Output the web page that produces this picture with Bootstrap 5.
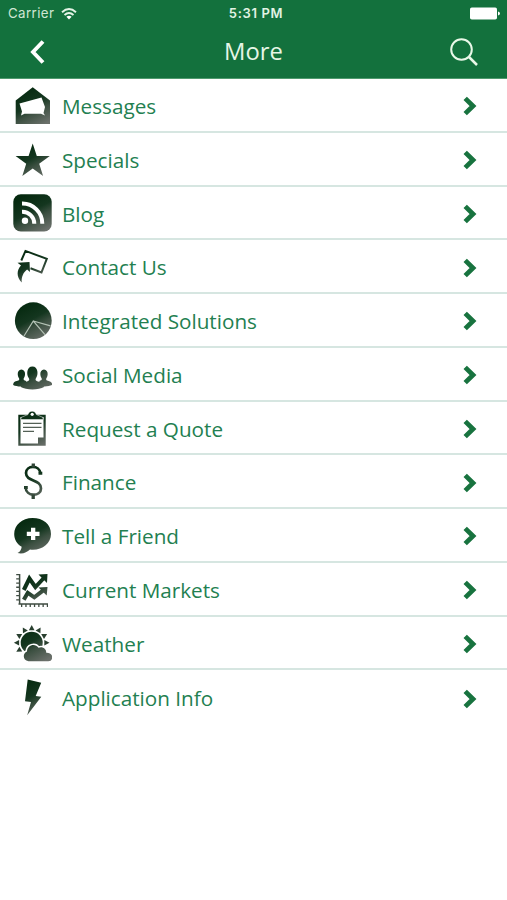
<!DOCTYPE html>
<html lang="en">
<head>
<meta charset="utf-8">
<meta name="viewport" content="width=device-width, initial-scale=1">
<title>More</title>
<link rel="stylesheet" href="https://cdn.jsdelivr.net/npm/bootstrap@5.3.0/dist/css/bootstrap.min.css">
<style>
body{font-family:"Open Sans","Noto Sans",sans-serif;min-height:900px;overflow:hidden}
.app-head{background:#13713d;height:79px;color:#f4fbf4;border-bottom:1px solid #4f9a6e}
.status{height:27px;font-family:Inter,"Liberation Sans",sans-serif;line-height:27px;padding:0 7px 0 8px}
.status>*{flex:1 1 0}
.carrier{color:#cfe6d3;font-size:13.3px;letter-spacing:.4px}
.clock{font-weight:600;font-size:13px;letter-spacing:.65px;color:#e2f3e4;padding-left:4px}
.titlebar{height:49px;padding:0 29px}
.titlebar h1{font-size:23.8px;font-weight:400;line-height:49px;color:#e6f6e6}
.menu .list-group-item{height:53.75px;padding:1px 30px 0 12px;border-color:#d6e6e1;border-width:0 0 2px;color:#237f51;font-size:20.700px;line-height:1}
.menu .list-group-item:last-child{border-bottom-color:transparent}
.pic{width:40px;height:54px;flex:none;margin-top:1px}
.label{padding-left:10px;padding-top:2px;white-space:nowrap}
.go{margin-top:2px}
svg{display:block}
</style>
<script src="https://cdn.jsdelivr.net/npm/bootstrap@5.3.0/dist/js/bootstrap.bundle.min.js"></script>
</head>
<body class="bg-white">
<svg width="0" height="0" class="position-absolute" aria-hidden="true"><defs>
<linearGradient id="g" gradientUnits="userSpaceOnUse" x1="24" y1="10" x2="43" y2="46"><stop offset="0" stop-color="#05290f"/><stop offset=".42" stop-color="#14361f"/><stop offset=".62" stop-color="#3b4f40"/><stop offset="1" stop-color="#6b706b"/></linearGradient>
<symbol id="chev" viewBox="0 0 14 20"><path d="M2.200 2.400 10 10l-7.800 7.600" fill="none" stroke="#18733f" stroke-width="4.800"/></symbol>
</defs></svg>

<header class="app-head">
  <div class="status d-flex">
    <div class="carrier d-flex align-items-center">Carrier
      <svg style="margin-left:7px" width="16" height="12" viewBox="0 0 16 12" fill="none" stroke="#e4f4e6" stroke-width="1.900"><path d="M1 4.200Q8-2 15 4.200M3.500 7Q8 3 12.500 7"/><path d="M5.400 8.700Q8 6.600 10.600 8.700L8 11.500Z" fill="#fff" stroke="none"/></svg>
    </div>
    <div class="clock text-center">5:31 PM</div>
    <div class="d-flex justify-content-end align-items-center"><svg width="30" height="13" viewBox="0 0 30 13" fill="#fff"><rect width="27" height="12" y=".500" rx="1.800"/><path d="M28 4.500q2 .500 2 2t-2 2z"/></svg></div>
  </div>
  <div class="titlebar d-flex align-items-center justify-content-between">
    <svg width="28" height="26" viewBox="0 0 28 26"><path d="M14 2.500 4 13l10 10.500" fill="none" stroke="#fff" stroke-width="3.900"/></svg>
    <h1 class="m-0">More</h1>
    <svg width="28" height="28" viewBox="0 0 28 28" fill="none" stroke="#e9f8e8" stroke-width="2"><circle cx="11.500" cy="11.500" r="10.300"/><path d="m19 19 8 8" stroke-width="2.500"/></svg>
  </div>
</header>

<main class="menu list-group list-group-flush rounded-0">
  <a href="#" class="list-group-item d-flex align-items-center">
    <svg class="pic" viewBox="12 0 40 54" fill="url(#g)"><path d="M15.700 21.500 32.700 8.300 50 21.500V45H15.700Z"/><path d="m19.500 24.500 22-6 3.500 9.500-1.500 6 1.500 2.500-4-1.800H24.500L21 36.500l1-4Z" fill="#fff"/></svg>
    <span class="label">Messages</span><svg class="go ms-auto" width="14" height="20"><use href="#chev"/></svg></a>
  <a href="#" class="list-group-item d-flex align-items-center">
    <svg class="pic" viewBox="12 0 40 54" fill="url(#g)"><path d="m32.700 10.400 4.100 12.500 13 .200-10.600 7.600 3.900 12.200-10.400-7.500-10.400 7.500 3.900-12.200L15.600 23.100l13-.200Z"/></svg>
    <span class="label">Specials</span><svg class="go ms-auto" width="14" height="20"><use href="#chev"/></svg></a>
  <a href="#" class="list-group-item d-flex align-items-center">
    <svg class="pic" viewBox="12 0 40 54" fill="url(#g)"><rect x="13.300" y="8.200" width="38.400" height="37.300" rx="7.500"/><g fill="none" stroke="#fff" stroke-width="4"><path d="M22 17.500A20 20 0 0 1 42.300 37.700M22 25.700A12 12 0 0 1 34.300 37.700"/></g><circle cx="25" cy="34.800" r="3.200" fill="#fff"/></svg>
    <span class="label">Blog</span><svg class="go ms-auto" width="14" height="20"><use href="#chev"/></svg></a>
  <a href="#" class="list-group-item d-flex align-items-center">
    <svg class="pic" viewBox="12 0 40 54" fill="url(#g)"><path d="m21.300 20.500 4.200-9.600 21.300 8-5.300 13.500-11-4.200" fill="none" stroke="url(#g)" stroke-width="2"/><path d="m17.500 22.800 12-.8.500 10-2.900-2.400c-3.800 3-5.600 7-5.400 13-5.600-6-5-12.500-.7-17Z"/></svg>
    <span class="label">Contact Us</span><svg class="go ms-auto" width="14" height="20"><use href="#chev"/></svg></a>
  <a href="#" class="list-group-item d-flex align-items-center">
    <svg class="pic" viewBox="12 0 40 54" fill="url(#g)"><circle cx="33.300" cy="26.700" r="18.400"/><path d="M24 42 33.300 27 45 40.700M33.300 27l17.200 4.800" fill="none" stroke="#b4c2b5" stroke-width="1.200"/></svg>
    <span class="label">Integrated Solutions</span><svg class="go ms-auto" width="14" height="20"><use href="#chev"/></svg></a>
  <a href="#" class="list-group-item d-flex align-items-center">
    <svg class="pic" viewBox="12 0 40 54" fill="url(#g)"><path d="M13.200 37c0-3 1.800-3.500 4.400-4.200 1.600-.500 2-1.200 1.400-2.600-2.200-3.200-1.600-8.800 2.400-8.800s4.600 5.600 2.400 8.800c-.600 1.500.200 2.300 2.200 2.800v5c-5 1-10 .500-12.800-1ZM52.200 37c0-3-1.800-3.500-4.400-4.200-1.600-.500-2-1.200-1.400-2.600 2.200-3.200 1.600-8.800-2.400-8.800s-4.600 5.600-2.400 8.800c.600 1.500-.200 2.300-2.200 2.800v5c5 1 10 .500 12.800-1Z"/><path d="M20.800 39c.300-3.300 2-4.300 5-5.200 3-.700 4-1.600 3.200-3.300-3-4-2.200-12 3.400-12s6.400 8 3.400 12c-.800 1.700.2 2.600 3.200 3.300 3 .900 4.700 1.900 5 5.200-5 3.300-18 3.300-23.200 0Z"/></svg>
    <span class="label">Social Media</span><svg class="go ms-auto" width="14" height="20"><use href="#chev"/></svg></a>
  <a href="#" class="list-group-item d-flex align-items-center">
    <svg class="pic" viewBox="12 0 40 54" fill="url(#g)"><path fill-rule="evenodd" d="M18.300 13.800H45.700V44.700H18.300ZM20.500 16V42.500H38V36.500H43.500V16Z"/><path d="M21 18.600V16.500l7-3c1-4.500 7.300-4.500 8.300 0l6.700 3v2.100Z" stroke="#fff" stroke-width=".500"/><circle cx="32.200" cy="13.300" r="1.600" fill="#fff"/><path d="M23 22.300h18.500M23 26.300h18.500M23 30.300h11" stroke="#536056" stroke-width="1.300"/></svg>
    <span class="label">Request a Quote</span><svg class="go ms-auto" width="14" height="20"><use href="#chev"/></svg></a>
  <a href="#" class="list-group-item d-flex align-items-center">
    <svg class="pic" viewBox="12 0 40 54" fill="none" stroke="url(#g)"><path d="M40.500 18.500C39.500 9.500 26 10 26 18c0 9 15 6 15 15.500 0 8.500-15 8.500-15.500-1.500" stroke-width="2.700"/><path d="M33.300 8.400v4M33.200 39.500V44" stroke="#304536" stroke-width="3.300"/><path d="M38.500 18.200h3.800M24 32.500h3.800" stroke-width="3"/></svg>
    <span class="label">Finance</span><svg class="go ms-auto" width="14" height="20"><use href="#chev"/></svg></a>
  <a href="#" class="list-group-item d-flex align-items-center">
    <svg class="pic" viewBox="12 0 40 54" fill="url(#g)"><path d="M32.600 9C22 9 14.200 16 14.200 25c0 5.500 2.800 10 7.500 12.800-.4 3-1.500 5-4.200 6.200 5 1.400 9.500-.6 12.500-3.500C41 42 51 35 51 25S43 9 32.600 9Z"/><path d="M31 18.800h4.300v4h4.200V27h-4.200v4H31v-4h-4.200v-4.200H31Z" fill="#fff"/></svg>
    <span class="label">Tell a Friend</span><svg class="go ms-auto" width="14" height="20"><use href="#chev"/></svg></a>
  <a href="#" class="list-group-item d-flex align-items-center">
    <svg class="pic" viewBox="12 0 40 54" fill="none" stroke="url(#g)"><g stroke="#3f4c42" stroke-width="1.500"><path d="M19.600 11V40.500M18.500 41H48"/><path d="M17.700 11v29" stroke-width="3" stroke-dasharray="1.300 2.900"/><path d="M21 42.500h27" stroke-width="3" stroke-dasharray="1.300 3"/></g><path d="m23.800 27 5.600-11.500 6 8.500 8-8.500M23.800 36.800l4-7 6.500 4.500 9-7" stroke-width="4"/><path d="m38.500 11.500 9-.500-.500 9ZM38.500 24.500l9-.500-.800 8.500Z" fill="url(#g)" stroke="none"/></svg>
    <span class="label">Current Markets</span><svg class="go ms-auto" width="14" height="20"><use href="#chev"/></svg></a>
  <a href="#" class="list-group-item d-flex align-items-center">
    <svg class="pic" viewBox="12 0 40 54" fill="url(#g)"><circle cx="31.700" cy="26.800" r="11"/><g fill="#293f2f"><path id="ray" d="m31.700 9 2.800 5.200h-5.600Z"/><use href="#ray" transform="rotate(30 31.700 26.800)"/><use href="#ray" transform="rotate(60 31.700 26.800)"/><use href="#ray" transform="rotate(90 31.700 26.800)"/><use href="#ray" transform="rotate(-30 31.700 26.800)"/><use href="#ray" transform="rotate(-60 31.700 26.800)"/><use href="#ray" transform="rotate(-90 31.700 26.800)"/><use href="#ray" transform="rotate(-120 31.700 26.800)"/></g><path d="M28.500 45.200c-6-1-6-8-1.500-9.700 0-6.500 8-8.700 11.500-3.800 4-1.700 8 1 7.700 5 3-.2 6 1.300 6 4.500 0 2.500-1.500 4-4 4Z" stroke="#fff" stroke-width="3" paint-order="stroke"/></svg>
    <span class="label">Weather</span><svg class="go ms-auto" width="14" height="20"><use href="#chev"/></svg></a>
  <a href="#" class="list-group-item d-flex align-items-center">
    <svg class="pic" viewBox="12 0 40 54" fill="url(#g)"><path d="M27.700 8.500 41.200 11.800 35.700 25l5.600.700L27.200 44.200 31 31l-6-.700Z"/></svg>
    <span class="label">Application Info</span><svg class="go ms-auto" width="14" height="20"><use href="#chev"/></svg></a>
</main>
</body>
</html>
